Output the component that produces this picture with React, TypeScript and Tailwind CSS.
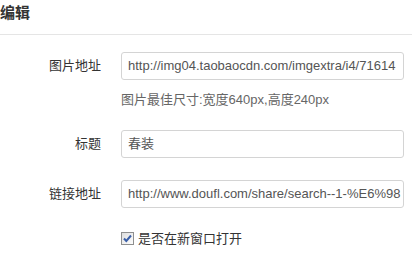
import React from "react";

const font = { fontFamily: '"Liberation Sans", "Noto Sans CJK SC", sans-serif' };

function Row({ label, value }: { label: string; value: string }) {
  return (
    <div className="flex items-center">
      <div className="w-[101px] text-right text-[13px] text-[#333]">{label}</div>
      <div className="ml-[20px] w-[283px] h-[28px] border border-[#d4d4d4] rounded-[3px] bg-white flex items-center px-[6px] overflow-hidden whitespace-nowrap text-[13px] text-[#555]">
        {value}
      </div>
    </div>
  );
}

export default function App() {
  return (
    <div style={font} className="w-[412px] h-[274px] bg-white overflow-hidden">
      <div className="h-[35px] border-b border-[#e5e5e5] flex items-start">
        <div className="pt-[3px] text-[15px] font-bold text-[#333] leading-[20px]">编辑</div>
      </div>
      <div className="pt-[17px]">
        <Row label="图片地址" value="http://img04.taobaocdn.com/imgextra/i4/71614" />
        <div className="ml-[121px] mt-[11px] text-[13px] text-[#666] leading-[18px]">图片最佳尺寸:宽度640px,高度240px</div>
        <div className="mt-[21px]">
          <Row label="标题" value="春装" />
        </div>
        <div className="mt-[22px]">
          <Row label="链接地址" value="http://www.doufl.com/share/search--1-%E6%98" />
        </div>
        <div className="ml-[121px] mt-[21px] flex items-center gap-[4px] text-[13px] text-[#333]">
          <svg width="13" height="13" viewBox="0 0 13 13">
            <defs>
              <linearGradient id="cbg" x1="0" y1="0" x2="1" y2="1">
                <stop offset="0" stopColor="#dcdcdc" />
                <stop offset="1" stopColor="#ffffff" />
              </linearGradient>
            </defs>
            <rect x="0.5" y="0.5" width="12" height="12" fill="url(#cbg)" stroke="#8e8f8f" />
            <path d="M3 6.5 L5.3 9 L10 3.5" fill="none" stroke="#3a5fa8" strokeWidth="2" />
          </svg>
          <span>是否在新窗口打开</span>
        </div>
      </div>
    </div>
  );
}
